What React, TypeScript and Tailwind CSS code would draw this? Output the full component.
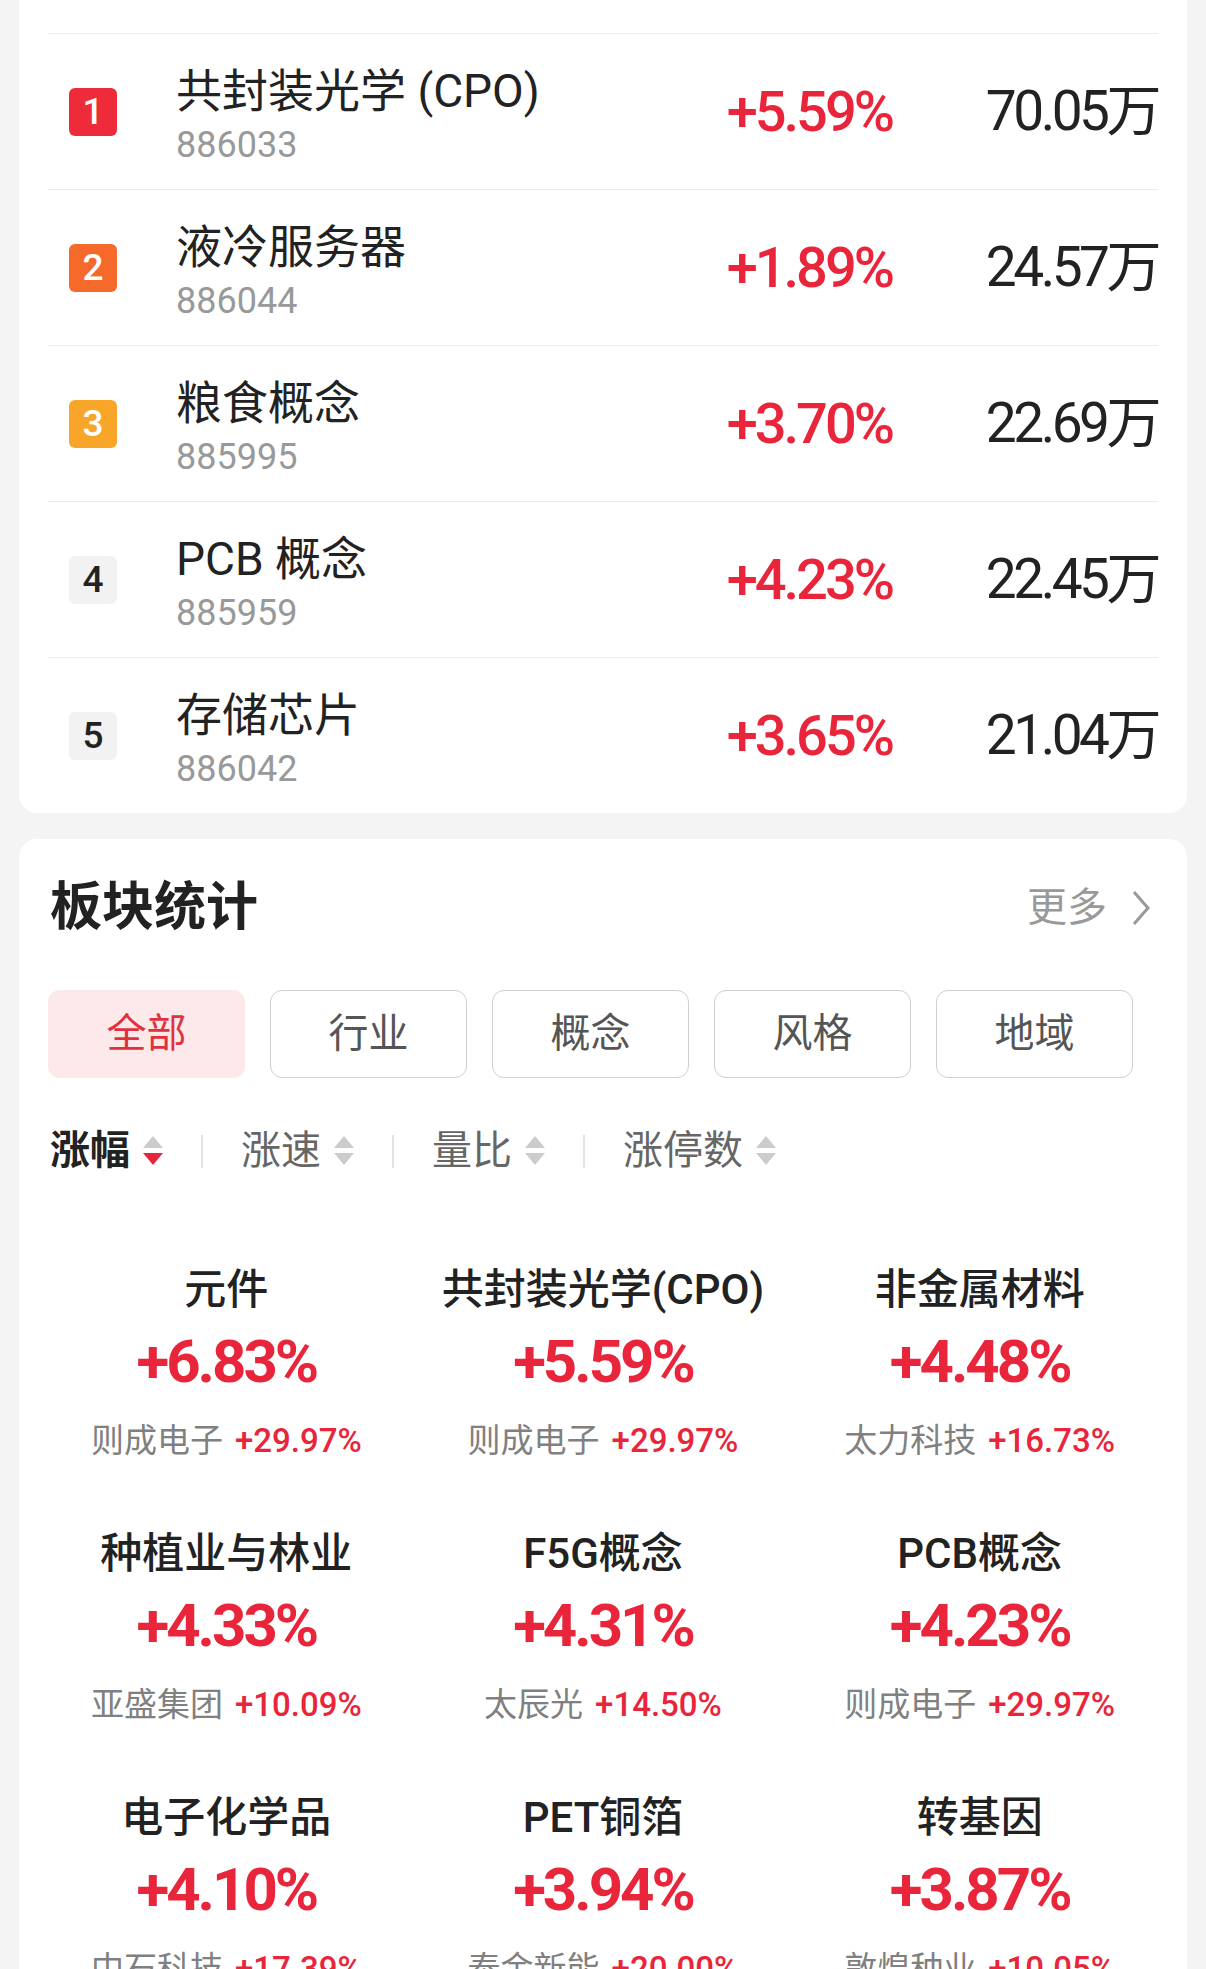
import React from 'react';

// 热门板块排行 + 板块统计 页面

const ranks = [
    { no: 1, name: '共封装光学 (CPO)', code: '886033', pct: '+5.59%', amt: '70.05万', badge: 'bg-[#ee2b3b] text-white' },
    { no: 2, name: '液冷服务器', code: '886044', pct: '+1.89%', amt: '24.57万', badge: 'bg-[#f5692b] text-white' },
    { no: 3, name: '粮食概念', code: '885995', pct: '+3.70%', amt: '22.69万', badge: 'bg-[#f8a629] text-white' },
    { no: 4, name: 'PCB 概念', code: '885959', pct: '+4.23%', amt: '22.45万', badge: 'bg-[#f2f2f2] text-[#222]' },
    { no: 5, name: '存储芯片', code: '886042', pct: '+3.65%', amt: '21.04万', badge: 'bg-[#f2f2f2] text-[#222]' },
];

const filters = ['全部', '行业', '概念', '风格', '地域'];

const sorts = [
    { label: '涨幅', active: true },
    { label: '涨速', active: false },
    { label: '量比', active: false },
    { label: '涨停数', active: false },
];

const sectors = [
    { name: '元件', pct: '+6.83%', lead: '则成电子', leadPct: '+29.97%' },
    { name: '共封装光学(CPO)', pct: '+5.59%', lead: '则成电子', leadPct: '+29.97%' },
    { name: '非金属材料', pct: '+4.48%', lead: '太力科技', leadPct: '+16.73%' },
    { name: '种植业与林业', pct: '+4.33%', lead: '亚盛集团', leadPct: '+10.09%' },
    { name: 'F5G概念', pct: '+4.31%', lead: '太辰光', leadPct: '+14.50%' },
    { name: 'PCB概念', pct: '+4.23%', lead: '则成电子', leadPct: '+29.97%' },
    { name: '电子化学品', pct: '+4.10%', lead: '中石科技', leadPct: '+17.39%' },
    { name: 'PET铜箔', pct: '+3.94%', lead: '泰金新能', leadPct: '+20.00%' },
    { name: '转基因', pct: '+3.87%', lead: '敦煌种业', leadPct: '+10.05%' },
];

/** 排序箭头 */
function SortArrow({ active }: { active: boolean }) {
    return (
        <svg width="20" height="30" viewBox="0 0 20 30" className="shrink-0">
            <polygon points="10,0 20,12 0,12" fill="#cccccc" />
            <polygon points="0,17 20,17 10,29" fill={active ? '#e8253a' : '#cccccc'} />
        </svg>
    );
}

export default function App() {
    return (
        <div className="h-[1969px] overflow-hidden bg-[#f4f4f4] font-['Roboto','Noto_Sans_CJK_SC',sans-serif]">
            <div className="pl-[19px] pr-[19px]">
                {/* 排行卡片 (顶部被截断) */}
                <div className="bg-white rounded-b-[18px] px-[29px] pt-[33px]">
                    {ranks.map((r) => (
                        <div key={r.no} className="flex items-center h-[156px] border-t border-[#ebebeb]">
                            <div
                                className={`ml-[21px] w-[48px] h-[48px] rounded-[6px] flex items-center justify-center text-[37px] font-medium leading-none ${r.badge}`}
                            >
                                {r.no}
                            </div>
                            <div className="ml-[59px] flex-1 mt-[12px]">
                                <div className="text-[46px] leading-[54px] text-[#222]">{r.name}</div>
                                <div className="text-[36px] leading-[54px] text-[#999]">{r.code}</div>
                            </div>
                            <div className="text-[56px] leading-none font-medium tracking-[-3px] text-[#e8253a]">
                                {r.pct}
                            </div>
                            <div className="w-[266px] text-right text-[55px] leading-none tracking-[-3.5px] text-[#222]">
                                {r.amt}
                            </div>
                        </div>
                    ))}
                </div>

                {/* 板块统计卡片 */}
                <div className="mt-[26px] bg-white rounded-t-[18px] px-[29px] pt-[39px]">
                    <div className="flex items-center justify-between pl-[2px] pr-[7px]">
                        <h2 className="text-[52px] leading-[60px] font-bold text-[#222]">板块统计</h2>
                        <div className="flex items-center gap-[24px] text-[40px] leading-[60px] text-[#999]">
                            <span>更多</span>
                            <svg width="20" height="38" viewBox="0 0 20 38">
                                <polyline points="3,3 17,19 3,35" fill="none" stroke="#999" strokeWidth="3" />
                            </svg>
                        </div>
                    </div>

                    {/* 分类筛选 */}
                    <div className="mt-[52px] flex gap-[25px]">
                        {filters.map((f, i) => (
                            <div
                                key={f}
                                className={
                                    i === 0
                                        ? 'w-[197px] h-[88px] rounded-[12px] bg-[#fde8ea] text-[#e0323e] text-[40px] flex items-center justify-center'
                                        : 'w-[197px] h-[88px] rounded-[12px] border-[1.5px] border-[#cfcfcf] text-[#555] text-[40px] flex items-center justify-center'
                                }
                            >
                                {f}
                            </div>
                        ))}
                    </div>

                    {/* 排序 */}
                    <div className="mt-[49px] flex items-center pl-[2px] h-[48px]">
                        {sorts.map((s, i) => (
                            <React.Fragment key={s.label}>
                                {i > 0 && <div className="mx-[38px] w-[2px] h-[33px] bg-[#e3e3e3]" />}
                                <div className="flex items-center gap-[13px]">
                                    <span
                                        className={
                                            s.active
                                                ? 'text-[40px] leading-[48px] font-bold text-[#222]'
                                                : 'text-[40px] leading-[48px] text-[#666]'
                                        }
                                    >
                                        {s.label}
                                    </span>
                                    <SortArrow active={s.active} />
                                </div>
                            </React.Fragment>
                        ))}
                    </div>

                    {/* 板块网格 */}
                    <div className="mt-[90px] -mx-[10px] grid grid-cols-3 gap-y-[68px]">
                        {sectors.map((s) => (
                            <div key={s.name} className="flex flex-col items-center">
                                <div className="text-[42px] leading-[50px] font-medium text-[#222]">{s.name}</div>
                                <div className="mt-[11px] text-[60px] leading-[72px] font-bold tracking-[-3px] text-[#e8253a]">
                                    {s.pct}
                                </div>
                                <div className="mt-[23px] text-[33px] leading-[40px] flex items-center gap-[12px]">
                                    <span className="text-[#808080]">{s.lead}</span>
                                    <span className="text-[#e8253a] font-medium">{s.leadPct}</span>
                                </div>
                            </div>
                        ))}
                    </div>
                </div>
            </div>
        </div>
    );
}
